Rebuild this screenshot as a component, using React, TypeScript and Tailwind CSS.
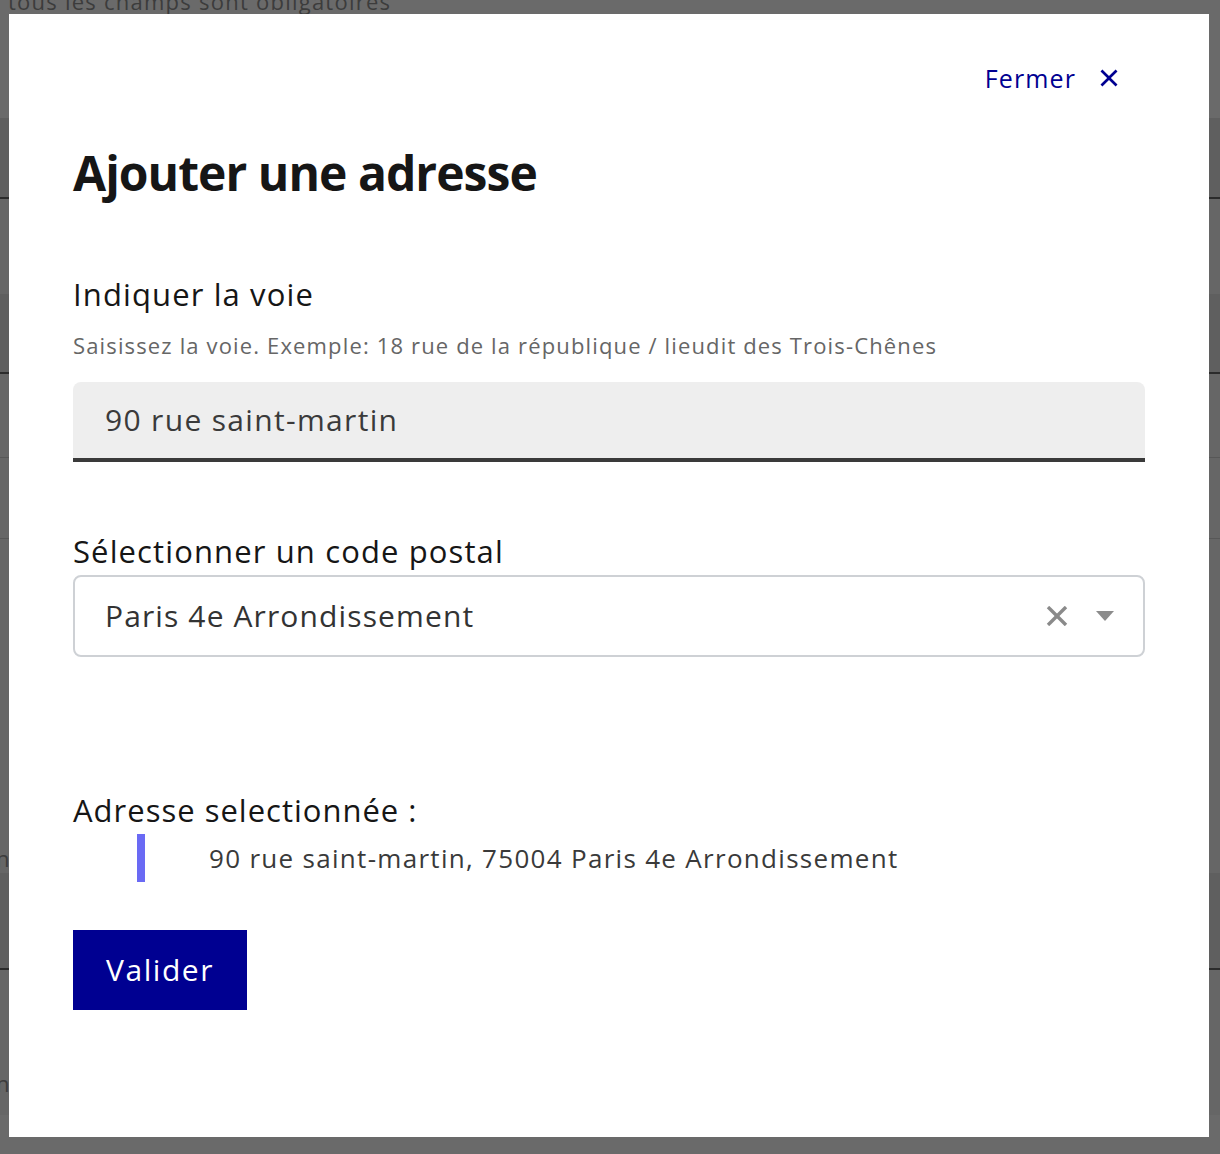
import React from "react";

function CloseIcon() {
  return (
    <svg width="32" height="32" viewBox="0 0 24 24" className="ml-[17px] shrink-0" aria-hidden="true">
      <path
        fill="#000091"
        d="M12 10.586l4.95-4.95 1.414 1.414-4.95 4.95 4.95 4.95-1.414 1.414-4.95-4.95-4.95 4.95-1.414-1.414 4.95-4.95-4.95-4.95L7.05 5.636z"
      />
    </svg>
  );
}

function ClearIcon() {
  return (
    <svg width="22" height="20" viewBox="0 0 22 20" aria-hidden="true" className="shrink-0">
      <line x1="2" y1="1" x2="20" y2="19" stroke="#8a8a8a" strokeWidth="3.4" />
      <line x1="20" y1="1" x2="2" y2="19" stroke="#8a8a8a" strokeWidth="3.4" />
    </svg>
  );
}

function CaretIcon() {
  return (
    <svg width="18" height="10" viewBox="0 0 18 10" aria-hidden="true" className="shrink-0">
      <polygon points="0,0 18,0 9,10" fill="#8c8c8c" />
    </svg>
  );
}

export default function App() {
  return (
    <div className="relative w-[1220px] h-[1154px] overflow-hidden bg-[#666666] font-['Open_Sans',sans-serif] tracking-[1.12px]">
      {/* Page behind the overlay */}
      <div className="flex flex-col">
        <div className="h-[118px] bg-[#6a6a6a] pl-[8px]">
          <div className="mt-[-14px] text-[22px] leading-[30px] tracking-[1.24px] text-[#3c3c3c]">
            tous les champs sont obligatoires
          </div>
        </div>
        <div className="h-[79px] bg-[#5f5f5f]" />
        <div className="h-[2px] bg-[#2b2b2b]" />
        <div className="h-[95px] bg-[#666666]" />
        <div className="h-[78px] bg-[#5f5f5f]" />
        <div className="h-[2px] bg-[#2b2b2b]" />
        <div className="h-[83px] bg-[#666666]" />
        <div className="h-[1px] bg-[#575757]" />
        <div className="h-[80px] bg-[#666666]" />
        <div className="h-[1px] bg-[#575757]" />
        <div className="h-[334px] bg-[#666666] flex flex-col justify-end">
          <div className="ml-[-4px] text-[22px] leading-[30px] text-[#3c3c3c]">nl</div>
        </div>
        <div className="h-[95px] bg-[#5f5f5f]" />
        <div className="h-[2px] bg-[#2b2b2b]" />
        <div className="h-[145px] bg-[#666666] flex flex-col justify-end">
          <div className="ml-[-4px] mb-[17px] text-[22px] leading-[30px] text-[#3c3c3c]">nl</div>
        </div>
        <div className="h-[39px] bg-[#6a6a6a]" />
      </div>

      {/* Modal */}
      <div className="absolute left-[9px] top-[14px] w-[1200px] h-[1123px] bg-white px-[64px] flex flex-col">
        <div className="pt-[48px] pr-[20px] flex justify-end">
          <button className="h-[32px] flex items-center text-[25px] font-medium text-[#000091] leading-[32px] tracking-[1.125px]">
            Fermer
            <CloseIcon />
          </button>
        </div>

        <h1 className="mt-[51px] text-[48px] leading-[56px] font-bold tracking-[-0.96px] text-[#161616]">
          Ajouter une adresse
        </h1>

        <div className="mt-[73px] text-[31px] leading-[40px] text-[#161616]">Indiquer la voie</div>
        <div className="mt-[16px] text-[22px] leading-[30px] tracking-[1.144px] text-[#666666]">
          Saisissez la voie. Exemple: 18 rue de la république / lieudit des Trois-Chênes
        </div>
        <div className="mt-[22px] h-[80px] bg-[#eeeeee] rounded-t-[8px] border-b-4 border-[#3a3a3a] flex items-center pl-[32px]">
          <span className="text-[30px] leading-[40px] tracking-[1.33px] text-[#3a3a3a]">90 rue saint-martin</span>
        </div>

        <div className="mt-[69px] text-[31px] leading-[40px] text-[#161616]">Sélectionner un code postal</div>
        <div className="mt-[4px] h-[82px] border-2 border-[#ced1d5] rounded-[8px] flex items-center pl-[30px] pr-[29px]">
          <span className="flex-1 text-[30px] leading-[40px] text-[#333333]">Paris 4e Arrondissement</span>
          <ClearIcon />
          <div className="ml-[28px] flex items-center">
            <CaretIcon />
          </div>
        </div>

        <div className="mt-[133px] text-[31px] leading-[40px] tracking-[1px] text-[#161616]">Adresse selectionnée :</div>
        <div className="mt-[4px] h-[48px] flex items-center pl-[64px]">
          <div className="w-[8px] h-[48px] bg-[#6a6af4]" />
          <span className="ml-[64px] text-[26px] leading-[36px] tracking-[1.3px] text-[#3a3a3a]">
            90 rue saint-martin, 75004 Paris 4e Arrondissement
          </span>
        </div>

        <div className="mt-[48px]">
          <button className="h-[80px] w-[174px] bg-[#000091] text-white text-[30px] leading-[40px] tracking-[1.55px] flex items-center justify-center">
            Valider
          </button>
        </div>
      </div>
    </div>
  );
}
